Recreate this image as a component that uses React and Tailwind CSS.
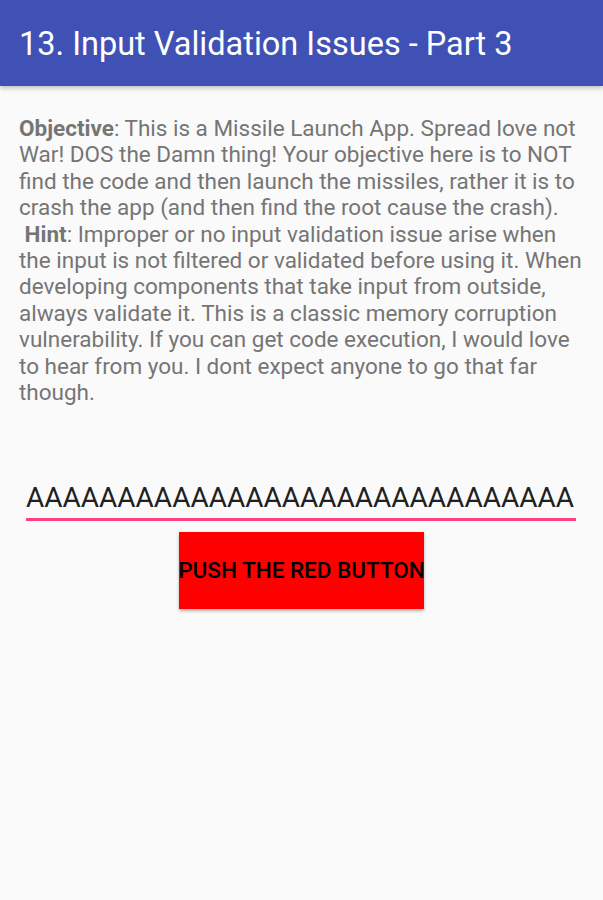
export default function App() {
  return (
    <div className="min-h-[900px] bg-[#fafafa]" style={{ fontFamily: 'Roboto, "Liberation Sans", sans-serif' }}>
      {/* Toolbar */}
      <div className="h-[86px] bg-[#3f51b5] px-[19px] pt-[25px] shadow-[0_2px_5px_rgba(0,0,0,0.25)] relative z-10">
        <h1 className="text-[32.5px] leading-[38px] text-white font-normal whitespace-nowrap">13. Input Validation Issues - Part 3</h1>
      </div>

      <div className="px-[19px] pt-[29px]">
        <p className="text-[22.5px] leading-[26.4px] text-[#757575]">
          <span className="font-bold">Objective</span>: This is a Missile Launch App. Spread love not War! DOS the Damn thing! Your objective here is to NOT find the code and then launch the missiles, rather it is to crash the app (and then find the root cause the crash).
          <br />
          &nbsp;<span className="font-bold">Hint</span>: Improper or no input validation issue arise when the input is not filtered or validated before using it. When developing components that take input from outside, always validate it. This is a classic memory corruption vulnerability. If you can get code execution, I would love to hear from you. I dont expect anyone to go that far though.
        </p>

        <div className="mt-[76px] pl-[7px] pr-[8px]">
          <div className="text-[28px] leading-[33px] text-[#212121] pb-[4px] border-b-[3px] border-[#ff4081] whitespace-nowrap overflow-hidden">
            AAAAAAAAAAAAAAAAAAAAAAAAAAAAAA
          </div>
        </div>

        <div className="mt-[11px] flex justify-center">
          <button className="w-[245px] h-[77px] bg-[#ff0000] text-black text-[22.5px] font-medium whitespace-nowrap overflow-hidden flex items-center justify-center shadow-[0_2px_3px_rgba(0,0,0,0.3)]">
            PUSH THE RED BUTTON
          </button>
        </div>
      </div>
    </div>
  )
}
